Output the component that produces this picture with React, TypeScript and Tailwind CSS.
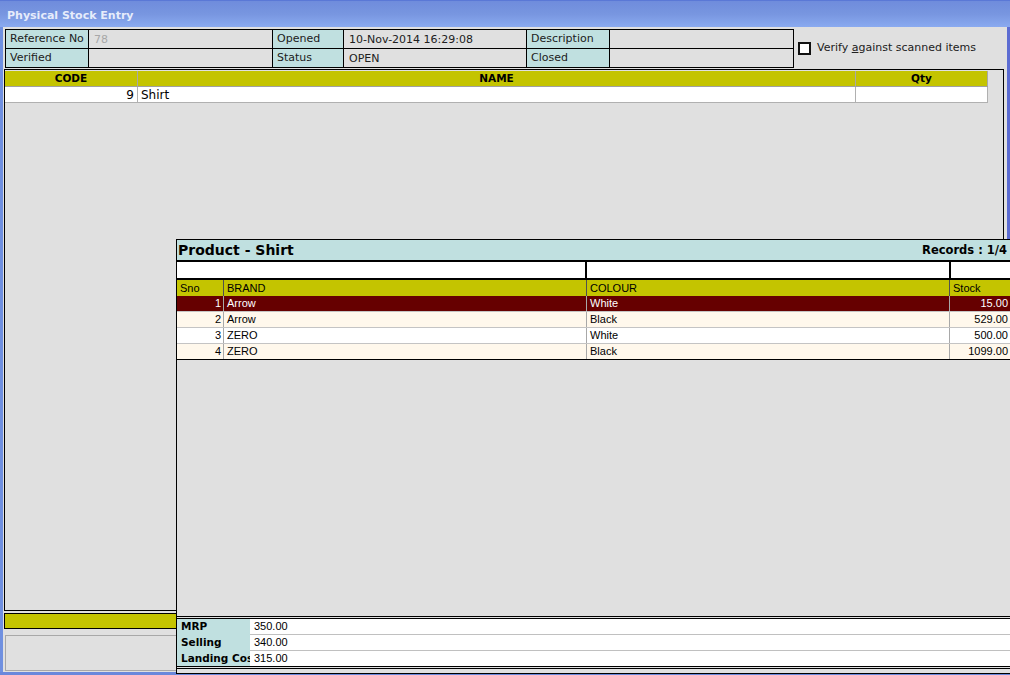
import React from 'react';

const rows = [
  { sno: 1, brand: 'Arrow', colour: 'White', stock: '15.00' },
  { sno: 2, brand: 'Arrow', colour: 'Black', stock: '529.00' },
  { sno: 3, brand: 'ZERO', colour: 'White', stock: '500.00' },
  { sno: 4, brand: 'ZERO', colour: 'Black', stock: '1099.00' },
];

function InfoLabel({ children }: { children: React.ReactNode }) {
  return (
    <div className="h-[19px] border-r border-b border-black bg-[#c0e0e0] pl-[4px] pt-[1px] text-[11px] leading-[15px] text-[#202020] whitespace-nowrap overflow-hidden">
      {children}
    </div>
  );
}

function InfoValue({ children, muted }: { children?: React.ReactNode; muted?: boolean }) {
  return (
    <div
      className={
        muted
          ? 'h-[19px] border-r border-b border-black bg-[#e0e0e0] pl-[5px] pt-[2px] text-[11px] leading-[15px] text-[#a8a8a8] whitespace-nowrap overflow-hidden'
          : 'h-[19px] border-r border-b border-black bg-[#e0e0e0] pl-[5px] pt-[2px] text-[11px] leading-[15px] text-[#202020] whitespace-nowrap overflow-hidden'
      }
    >
      {children}
    </div>
  );
}

export default function App() {
  return (
    <div className="relative w-[1010px] h-[675px] overflow-hidden bg-[#e0e0e0] font-['DejaVu_Sans',sans-serif]">
      {/* Title bar */}
      <div className="h-[27px] border-t border-[#5a78d6] bg-linear-to-b from-[#6f8cdc] via-[#7896e0] to-[#8aaaf0] flex items-center pl-[7px] pt-[4px]">
        <span className="text-[11px] font-bold text-[#e6ecfb]">Physical Stock Entry</span>
      </div>

      {/* Body */}
      <div className="flex h-[645px]">
        <div className="w-[3px] bg-[#7090e0]" />
        <div className="flex-1 flex flex-col pl-[1px] pr-[3px] pt-[2px]">
          {/* Info row */}
          <div className="flex items-center">
            <div className="ml-[1px] grid grid-cols-[83px_184px_71px_183px_83px_184px] border-l border-t border-black">
              <InfoLabel>Reference No</InfoLabel>
              <InfoValue muted>78</InfoValue>
              <InfoLabel>Opened</InfoLabel>
              <InfoValue>10-Nov-2014 16:29:08</InfoValue>
              <InfoLabel>Description</InfoLabel>
              <InfoValue />
              <InfoLabel>Verified</InfoLabel>
              <InfoValue />
              <InfoLabel>Status</InfoLabel>
              <InfoValue>OPEN</InfoValue>
              <InfoLabel>Closed</InfoLabel>
              <InfoValue />
            </div>
            <div className="ml-[4px] flex items-center">
              <div className="w-[13px] h-[13px] border-[2px] border-[#111111] bg-white" />
              <span className="ml-[6px] text-[11px] text-[#202020]">
                Verify <span className="underline">a</span>gainst scanned items
              </span>
            </div>
          </div>

          {/* Main grid */}
          <div className="mt-[1px] h-[542px] border border-black pt-px">
            <div className="flex h-[16px] bg-[#c4c400] border-b border-[#a0a0a0] w-[983px]">
              <div className="w-[133px] border-r border-[#a8a8a8] flex items-center justify-center text-[10.5px] font-bold text-black">CODE</div>
              <div className="w-[718px] border-r border-[#a8a8a8] flex items-center justify-center text-[10.5px] font-bold text-black">NAME</div>
              <div className="w-[132px] border-r border-[#a8a8a8] flex items-center justify-center text-[10.5px] font-bold text-black">Qty</div>
            </div>
            <div className="flex h-[16px] bg-white border-b border-[#b0b0b0] w-[983px]">
              <div className="w-[133px] border-r border-[#b0b0b0] flex items-center justify-end pr-[3px] text-[12px] text-black">9</div>
              <div className="w-[718px] border-r border-[#b0b0b0] flex items-center pl-[3px] text-[12px] text-black">Shirt</div>
              <div className="w-[132px] border-r border-[#b0b0b0]" />
            </div>
          </div>

          {/* Olive footer bar */}
          <div className="mt-[2px] h-[16px] border border-black bg-[#c4c400]" />

          {/* Lower box */}
          <div className="mt-[6px] ml-[1px] h-[36px] border border-[#a8a8a8]" />
        </div>
        <div className="w-[3px] bg-[#5c6cd2]" />
      </div>
      <div className="h-[3px] bg-[#6a88dc]" />

      {/* Product popup */}
      <div className="absolute left-[176px] top-[239px] w-[834px] h-[435px] border-l border-t border-b border-black bg-[#e0e0e0] flex flex-col font-['Liberation_Sans',Arial,sans-serif]">
        {/* Title */}
        <div className="h-[22px] bg-[#c0e0e0] border-b-2 border-black flex items-center justify-between pl-[1px] pr-[3px]">
          <span className="text-[14px] font-bold text-black font-['DejaVu_Sans',sans-serif] leading-[18px]">Product - Shirt</span>
          <span className="text-[11.5px] font-bold text-black font-['DejaVu_Sans',sans-serif] pt-[2px]">Records : 1/4</span>
        </div>
        {/* Filter inputs */}
        <div className="h-[18px] flex bg-black border-b-2 border-black">
          <div className="w-[408px] bg-white" />
          <div className="w-[362px] ml-[2px] bg-white" />
          <div className="flex-1 ml-[2px] bg-white" />
        </div>
        {/* Header */}
        <div className="flex h-[16px] bg-[#c4c400] text-[11px] text-black">
          <div className="w-[47px] border-r border-[#505050] flex items-center pl-[3px]">Sno</div>
          <div className="w-[363px] border-r border-[#505050] flex items-center pl-[3px]">BRAND</div>
          <div className="w-[363px] border-r border-[#505050] flex items-center pl-[3px]">COLOUR</div>
          <div className="flex-1 flex items-center pl-[3px]">Stock</div>
        </div>
        {/* Rows */}
        {rows.map((r, i) => {
          const selected = i === 0;
          const bg = selected ? 'bg-[#660000] text-white' : i % 2 === 1 ? 'bg-[#fff8ec] text-black' : 'bg-white text-black';
          const last = i === rows.length - 1;
          return (
            <div
              key={r.sno}
              className={
                (last ? 'border-b border-black ' : 'border-b border-[#c4c4c4] ') +
                'flex h-[16px] text-[11px] ' +
                bg
              }
            >
              <div className="w-[47px] border-r border-[#a8a8a8] flex items-center justify-end pr-[2px]">{r.sno}</div>
              <div className="w-[363px] border-r border-[#a8a8a8] flex items-center pl-[3px]">{r.brand}</div>
              <div className="w-[363px] border-r border-[#a8a8a8] flex items-center pl-[3px]">{r.colour}</div>
              <div className="flex-1 flex items-center justify-end pr-[2px]">{r.stock}</div>
            </div>
          );
        })}
        <div className="flex-1" />
        {/* Price section */}
        <div className="h-[3px] border-t border-b border-black" />
        <div className="flex flex-col">
          {[
            ['MRP', '350.00'],
            ['Selling', '340.00'],
            ['Landing Cost', '315.00'],
          ].map(([label, value], i) => (
            <div key={label} className={i === 2 ? 'flex h-[15px]' : 'flex h-[16px]'}>
              <div className="w-[73px] shrink-0 bg-[#c0e0e0] pl-[4px] text-[10.5px] font-bold text-black font-['DejaVu_Sans',sans-serif] whitespace-nowrap overflow-hidden flex items-center">
                {label}
              </div>
              <div
                className={
                  i === 2
                    ? 'flex-1 bg-white pl-[4px] text-[11px] text-black flex items-center'
                    : 'flex-1 bg-white pl-[4px] text-[11px] text-black flex items-center border-b border-[#c0c0c0]'
                }
              >
                {value}
              </div>
            </div>
          ))}
        </div>
        <div className="h-[3px] border-t border-b border-black" />
        <div className="h-[4px]" />
      </div>
    </div>
  );
}
